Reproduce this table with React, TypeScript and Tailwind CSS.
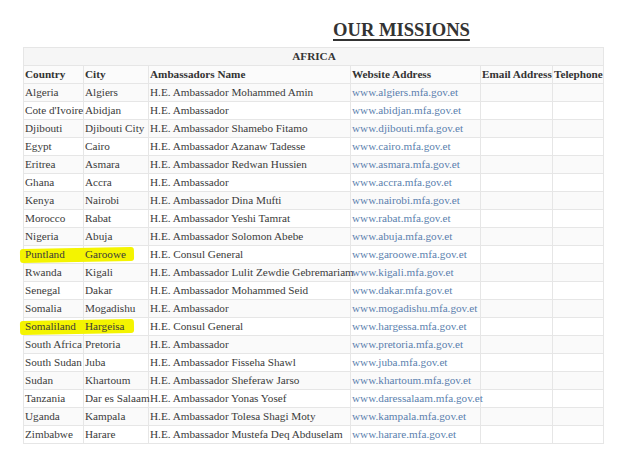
const rows: [string, string, string, string][] = [
  ['Algeria', 'Algiers', 'H.E. Ambassador Mohammed Amin', 'www.algiers.mfa.gov.et'],
  ["Cote d'Ivoire", 'Abidjan', 'H.E. Ambassador', 'www.abidjan.mfa.gov.et'],
  ['Djibouti', 'Djibouti City', 'H.E. Ambassador Shamebo Fitamo', 'www.djibouti.mfa.gov.et'],
  ['Egypt', 'Cairo', 'H.E. Ambassador Azanaw Tadesse', 'www.cairo.mfa.gov.et'],
  ['Eritrea', 'Asmara', 'H.E. Ambassador Redwan Hussien', 'www.asmara.mfa.gov.et'],
  ['Ghana', 'Accra', 'H.E. Ambassador', 'www.accra.mfa.gov.et'],
  ['Kenya', 'Nairobi', 'H.E. Ambassador Dina Mufti', 'www.nairobi.mfa.gov.et'],
  ['Morocco', 'Rabat', 'H.E. Ambassador Yeshi Tamrat', 'www.rabat.mfa.gov.et'],
  ['Nigeria', 'Abuja', 'H.E. Ambassador Solomon Abebe', 'www.abuja.mfa.gov.et'],
  ['Puntland', 'Garoowe', 'H.E. Consul General', 'www.garoowe.mfa.gov.et'],
  ['Rwanda', 'Kigali', 'H.E. Ambassador Lulit Zewdie Gebremariam', 'www.kigali.mfa.gov.et'],
  ['Senegal', 'Dakar', 'H.E. Ambassador Mohammed Seid', 'www.dakar.mfa.gov.et'],
  ['Somalia', 'Mogadishu', 'H.E. Ambassador', 'www.mogadishu.mfa.gov.et'],
  ['Somaliland', 'Hargeisa', 'H.E. Consul General', 'www.hargessa.mfa.gov.et'],
  ['South Africa', 'Pretoria', 'H.E. Ambassador', 'www.pretoria.mfa.gov.et'],
  ['South Sudan', 'Juba', 'H.E. Ambassador Fisseha Shawl', 'www.juba.mfa.gov.et'],
  ['Sudan', 'Khartoum', 'H.E. Ambassador Sheferaw Jarso', 'www.khartoum.mfa.gov.et'],
  ['Tanzania', 'Dar es Salaam', 'H.E. Ambassador Yonas Yosef', 'www.daressalaam.mfa.gov.et'],
  ['Uganda', 'Kampala', 'H.E. Ambassador Tolesa Shagi Moty', 'www.kampala.mfa.gov.et'],
  ['Zimbabwe', 'Harare', 'H.E. Ambassador Mustefa Deq Abduselam', 'www.harare.mfa.gov.et'],
]

const highlighted = ['Puntland', 'Somaliland']

const cell = 'border border-[#e6e6e6] pl-[1px] pr-0 h-[18px] leading-[17px] whitespace-nowrap'

export default function App() {
  return (
    <div className="w-[640px] h-[459px] bg-white font-['Liberation_Serif',serif] text-[11.2px] text-[#3a3a3a]">
      <div className="pt-[19px] pl-[333px] h-[47px]">
        <h1 className="text-[18.6px] leading-[22px] font-bold underline underline-offset-[3px] decoration-[1.5px] text-[#333]">
          OUR MISSIONS
        </h1>
      </div>
      <table className="ml-[23px] w-[580px] border-collapse table-fixed">
        <colgroup>
          <col className="w-[60px]" />
          <col className="w-[65px]" />
          <col className="w-[202px]" />
          <col className="w-[130px]" />
          <col className="w-[72px]" />
          <col className="w-[51px]" />
        </colgroup>
        <thead>
          <tr className="bg-[#f6f6f6]">
            <th colSpan={6} className={`${cell} text-center font-bold text-[#333]`}>AFRICA</th>
          </tr>
          <tr className="bg-[#fbfbfb]">
            {['Country', 'City', 'Ambassadors Name', 'Website Address', 'Email Address', 'Telephone'].map(h => (
              <th key={h} className={`${cell} text-left font-bold text-[#333]`}>{h}</th>
            ))}
          </tr>
        </thead>
        <tbody>
          {rows.map(([country, city, name, site], i) => {
            const hl = highlighted.includes(country)
            return (
              <tr key={country} className={i % 2 === 0 ? 'bg-[#fafafa]' : 'bg-white'}>
                <td className={`${cell} relative`}>
                  {hl && (
                    <span className="absolute left-[-4px] top-[2px] h-[14px] w-[114px] bg-[#f4f400] rounded-[3px] -rotate-[1deg]" />
                  )}
                  <span className="relative">{country}</span>
                </td>
                <td className={`${cell} relative`}>
                  <span className="relative">{city}</span>
                </td>
                <td className={cell}>{name}</td>
                <td className={`${cell} text-[#5b7fae]`}>{site}</td>
                <td className={cell}></td>
                <td className={cell}></td>
              </tr>
            )
          })}
        </tbody>
      </table>
    </div>
  )
}
